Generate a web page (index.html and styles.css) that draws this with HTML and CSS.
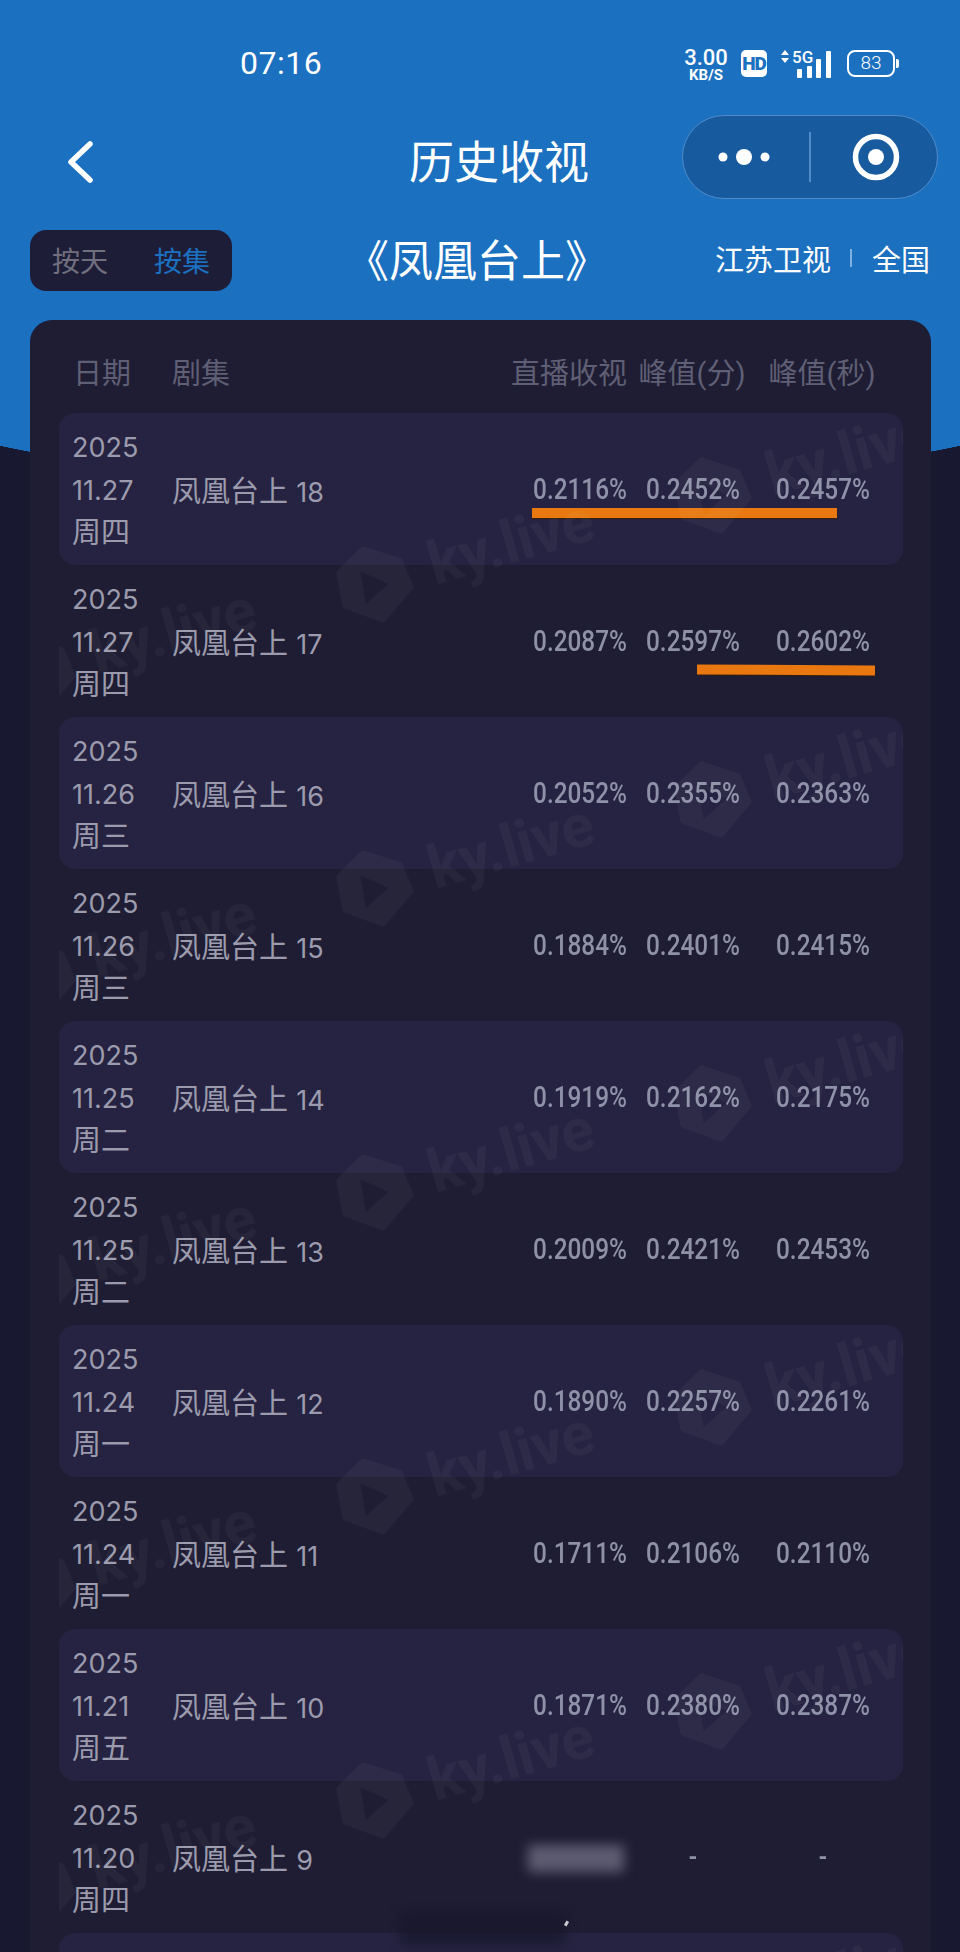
FILE: index.html
```html
<!DOCTYPE html>
<html lang="zh-CN">
<head>
  <meta charset="UTF-8">
  <meta name="viewport" content="width=device-width, initial-scale=1.0">
  <title>历史收视</title>
  <link rel="stylesheet" href="styles.css">
</head>
<body>
  <div class="arc"></div>
  <div class="page">
    <div class="status">
      <span class="time">07:16</span>
      <div class="status-icons">
        <div class="speed"><b>3.00</b><small>KB/S</small></div>
        <span class="hd">HD</span>
        <svg class="signal" width="52" height="30" viewBox="0 0 52 30">
          <path d="M4 2 L8 7 L0 7 Z M4 15 L0 10 L8 10 Z" fill="#fff"/>
          <text x="11" y="15" class="signal-text">5G</text>
          <rect x="16" y="21" width="5" height="9" rx="1" fill="#fff"/>
          <rect x="26" y="18" width="5" height="12" rx="1" fill="#fff"/>
          <rect x="35" y="11" width="5" height="19" rx="1" fill="#fff"/>
          <rect x="45" y="3" width="5" height="27" rx="1" fill="#fff"/>
        </svg>
        <div class="battery"><span class="battery-body">83</span><i class="battery-nub"></i></div>
      </div>
    </div>

    <div class="navbar">
      <svg class="back" width="30" height="44" viewBox="0 0 30 44">
        <path d="M24 4 L5 22 L24 40" fill="none" stroke="#fff" stroke-width="5.5" stroke-linecap="round" stroke-linejoin="round"/>
      </svg>
      <h1 class="nav-title">历史收视</h1>
      <div class="capsule">
        <svg width="60" height="20" viewBox="0 0 60 20">
          <circle cx="9" cy="10" r="4.5" fill="#fff"/>
          <circle cx="30" cy="10" r="8" fill="#fff"/>
          <circle cx="51" cy="10" r="4.5" fill="#fff"/>
        </svg>
        <i class="capsule-line"></i>
        <svg class="capsule-target" width="50" height="50" viewBox="0 0 50 50">
          <circle cx="25" cy="25" r="20.5" fill="none" stroke="#fff" stroke-width="5.5"/>
          <circle cx="25" cy="25" r="8" fill="#fff"/>
        </svg>
      </div>
    </div>

    <div class="subhead">
      <div class="tabs">
        <span class="tab">按天</span>
        <span class="tab tab-on">按集</span>
      </div>
      <div class="show-name">《凤凰台上》</div>
      <div class="channel">
        <span>江苏卫视</span>
        <i class="channel-line"></i>
        <span>全国</span>
      </div>
    </div>

    <div class="panel">
      <div class="cols head">
        <span>日期</span>
        <span>剧集</span>
        <span class="c1">直播收视</span>
        <span class="c2">峰值(分)</span>
        <span class="c2">峰值(秒)</span>
      </div>

      <div class="list">
        <div class="cols row">
          <div class="date"><span class="num">2025</span><br><span class="num">11.27</span><br>周四</div>
          <div>凤凰台上 <span class="num ep">18</span></div>
          <div class="c1 val">0.2116%</div>
          <div class="c2 val">0.2452%</div>
          <div class="c2 val">0.2457%</div>
          <i class="mark mark-a"></i>
        </div>
        <div class="cols row">
          <div class="date"><span class="num">2025</span><br><span class="num">11.27</span><br>周四</div>
          <div>凤凰台上 <span class="num ep">17</span></div>
          <div class="c1 val">0.2087%</div>
          <div class="c2 val">0.2597%</div>
          <div class="c2 val">0.2602%</div>
          <i class="mark mark-b"></i>
        </div>
        <div class="cols row">
          <div class="date"><span class="num">2025</span><br><span class="num">11.26</span><br>周三</div>
          <div>凤凰台上 <span class="num ep">16</span></div>
          <div class="c1 val">0.2052%</div>
          <div class="c2 val">0.2355%</div>
          <div class="c2 val">0.2363%</div>
        </div>
        <div class="cols row">
          <div class="date"><span class="num">2025</span><br><span class="num">11.26</span><br>周三</div>
          <div>凤凰台上 <span class="num ep">15</span></div>
          <div class="c1 val">0.1884%</div>
          <div class="c2 val">0.2401%</div>
          <div class="c2 val">0.2415%</div>
        </div>
        <div class="cols row">
          <div class="date"><span class="num">2025</span><br><span class="num">11.25</span><br>周二</div>
          <div>凤凰台上 <span class="num ep">14</span></div>
          <div class="c1 val">0.1919%</div>
          <div class="c2 val">0.2162%</div>
          <div class="c2 val">0.2175%</div>
        </div>
        <div class="cols row">
          <div class="date"><span class="num">2025</span><br><span class="num">11.25</span><br>周二</div>
          <div>凤凰台上 <span class="num ep">13</span></div>
          <div class="c1 val">0.2009%</div>
          <div class="c2 val">0.2421%</div>
          <div class="c2 val">0.2453%</div>
        </div>
        <div class="cols row">
          <div class="date"><span class="num">2025</span><br><span class="num">11.24</span><br>周一</div>
          <div>凤凰台上 <span class="num ep">12</span></div>
          <div class="c1 val">0.1890%</div>
          <div class="c2 val">0.2257%</div>
          <div class="c2 val">0.2261%</div>
        </div>
        <div class="cols row">
          <div class="date"><span class="num">2025</span><br><span class="num">11.24</span><br>周一</div>
          <div>凤凰台上 <span class="num ep">11</span></div>
          <div class="c1 val">0.1711%</div>
          <div class="c2 val">0.2106%</div>
          <div class="c2 val">0.2110%</div>
        </div>
        <div class="cols row">
          <div class="date"><span class="num">2025</span><br><span class="num">11.21</span><br>周五</div>
          <div>凤凰台上 <span class="num ep">10</span></div>
          <div class="c1 val">0.1871%</div>
          <div class="c2 val">0.2380%</div>
          <div class="c2 val">0.2387%</div>
        </div>
        <div class="cols row">
          <div class="date"><span class="num">2025</span><br><span class="num">11.20</span><br>周四</div>
          <div>凤凰台上 <span class="num ep">9</span></div>
          <div class="c1"><span class="blurred"></span></div>
          <div class="c2 val">-</div>
          <div class="c2 val">-</div>
        </div>
        <div class="cols row"></div>

        <!-- watermark, coordinates are page coordinates -->
        <svg class="watermark" viewBox="59 413 844 1539">
          <defs>
            <g id="wm">
              <path class="wm-logo" fill-rule="evenodd" d="M-12 -36 L25 -24 L36 2 L8 35 L-30 21 L-36 -12 Z M-18 -18 L-11 24 L18 -2 Z"/>
              <text class="wm-text" x="60" y="0" transform="rotate(-16 60 0)">ky.live</text>
            </g>
            <pattern id="wm-tile" patternUnits="userSpaceOnUse" x="0" y="395" width="960" height="304">
              <use href="#wm" x="375" y="190"/>
              <use href="#wm" x="713" y="101"/>
              <use href="#wm" x="37" y="279"/>
            </pattern>
          </defs>
          <rect x="59" y="413" width="844" height="1539" fill="url(#wm-tile)"/>
        </svg>
      </div>
    </div>
  </div>
  <div class="smudge"></div>
  <i class="speck"></i>
</body>
</html>
```

FILE: styles.css
```css
* { margin: 0; padding: 0; box-sizing: border-box; }
html, body { height: 1952px; overflow: hidden; }
body { position: relative; width: 960px; background: #181830; color: #fff; font-family: Roboto, "Noto Sans CJK SC", sans-serif; }
i { display: block; }

/* blue top with curved bottom edge */
.arc { position: absolute; top: 0; left: 0; width: 960px; height: 489px; background: radial-gradient(ellipse 700px 158px at 480px 331px, #1b70c0 99.8%, transparent 100%), linear-gradient(#1b70c0 331px, transparent 331px); }
.page { position: relative; }

.status { height: 115px; padding: 45px 61px 0 240px; display: flex; justify-content: space-between; }
.time { font-size: 32px; line-height: 36px; letter-spacing: 0.5px; }
.status-icons { display: flex; align-items: flex-start; padding-top: 3px; }
.speed { width: 48px; display: flex; flex-direction: column; align-items: center; font-weight: 700; }
.speed b { font-size: 22px; line-height: 20px; font-weight: 500; }
.speed small { font-size: 15px; line-height: 14px; font-weight: 700; }
.hd { width: 26px; height: 27px; margin: 2px 0 0 11px; background: #fff; border-radius: 5px; color: #1b70c0; font-size: 19px; line-height: 27px; font-weight: 900; text-align: center; letter-spacing: -1px; }
.signal { margin: 0 0 0 14px; }
.signal-text { font-family: Roboto, sans-serif; font-size: 17px; font-weight: 500; fill: #fff; }
.battery { display: flex; align-items: center; height: 27px; margin: 2px 0 0 14px; }
.battery-body { width: 48px; height: 27px; border: 2.5px solid #fff; border-radius: 8px; font-size: 19px; line-height: 22px; font-weight: 300; text-align: center; }
.battery-nub { width: 3px; height: 9px; margin-left: 1px; background: #fff; border-radius: 0 2px 2px 0; }

.navbar { height: 84px; padding: 0 22px 0 66px; display: flex; align-items: center; }
.back { flex: none; margin-top: 10px; }
.nav-title { width: 179px; margin-left: 313px; margin-top: 14px; font-size: 45px; font-weight: 400; line-height: 60px; white-space: nowrap; }
.capsule { width: 256px; height: 84px; margin-left: auto; padding-left: 31px; display: flex; align-items: center; background: #175a9e; border: 1.5px solid #4f8bc9; border-radius: 42px; }
.capsule-line { width: 2px; height: 50px; margin-left: 35px; background: #4f8bc9; }
.capsule-target { margin-left: 40px; }

.subhead { height: 61px; margin-top: 31px; padding: 0 30px; display: flex; align-items: center; }
.tabs { width: 202px; height: 61px; padding: 0 22px 2px; display: flex; align-items: center; justify-content: space-between; background: #1e1d38; border-radius: 16px; font-size: 28px; color: #706f7e; }
.tab-on { color: #1b70c0; }
.show-name { margin-left: 113px; margin-top: 2px; font-size: 44px; line-height: 60px; }
.channel { margin-left: auto; margin-bottom: 5px; display: flex; align-items: center; font-size: 29px; }
.channel-line { width: 2px; height: 18px; margin: 0 20px 0 19px; background: #7fb2e2; }

.panel { height: 1700px; margin: 29px 29px 0 30px; background: #1e1d33; border-radius: 22px 22px 0 0; }
.cols { display: grid; grid-template-columns: 99px 245px 1fr 130px 130px; align-items: center; font-size: 29px; }
.head { height: 93px; padding: 8px 44px 0 43px; color: #5f5f75; }
.c1 { text-align: right; }
.c2 { text-align: center; }
.list { position: relative; height: 1607px; margin: 0 28px 0 29px; overflow: hidden; }
.row { position: relative; height: 152px; padding: 0 15px 0 13px; border-radius: 16px; color: #9c9bad; }
.row:nth-child(odd) { background: #252341; }
.date { padding-top: 3px; line-height: 43px; }
.date, .row > div:nth-child(2) { white-space: nowrap; }
.row > div:nth-child(2) { margin-left: 1px; }
.num { font-family: Inter, sans-serif; font-size: 27px; }
.ep { margin-left: 1px; }
.val { font-size: 29px; font-weight: 500; color: #8f91a8; transform: scaleX(.84); }
.c1.val { margin-right: 1px; transform-origin: right center; }
.blurred { display: block; width: 96px; height: 27px; margin: 2px 4px 0 auto; background: #5c5b70; filter: blur(6px); }

/* hand drawn orange lines on top of the numbers */
.mark { position: absolute; height: 10px; background: #e8780f; box-shadow: 0 1px 1px rgba(60,30,0,.7); }
.mark-a { top: 95px; left: 473px; width: 305px; }
.mark-b { top: 100px; left: 638px; width: 178px; transform: rotate(.4deg); }

.watermark { position: absolute; left: 0; top: 0; width: 844px; height: 1539px; pointer-events: none; }
.wm-logo { fill: #fff; stroke: #fff; stroke-width: 5; stroke-linejoin: round; opacity: .035; }
.wm-text { font-family: Roboto, sans-serif; font-size: 60px; font-weight: 700; fill: #fff; fill-opacity: .035; }

.smudge { position: absolute; left: 400px; top: 1912px; width: 165px; height: 32px; background: #17162b; opacity: .7; filter: blur(6px); }
.speck { position: absolute; left: 565px; top: 1921px; width: 3px; height: 5px; background: #c9c9d2; transform: rotate(30deg); }
```
